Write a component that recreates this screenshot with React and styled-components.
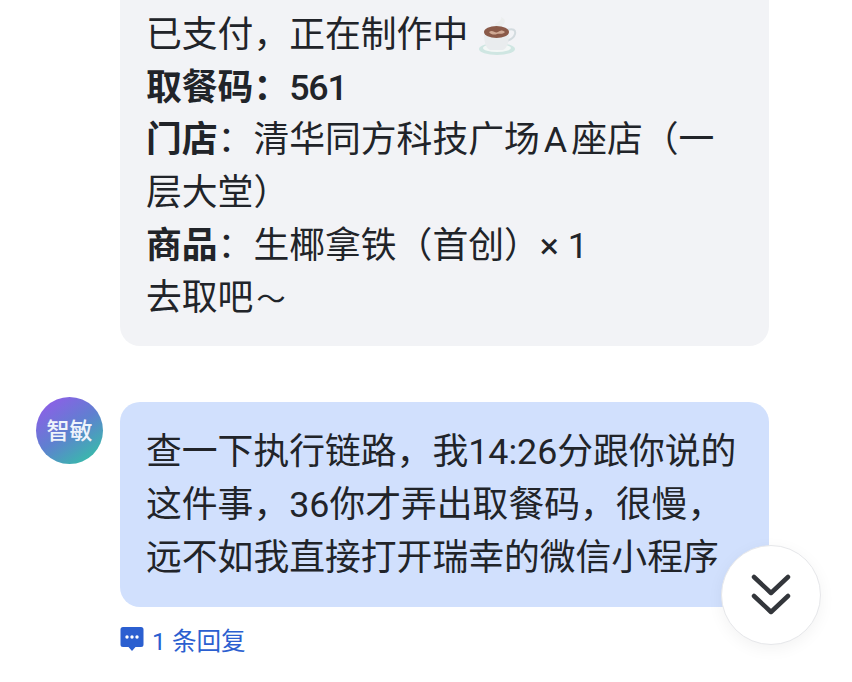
import React from "react";
import styled, { createGlobalStyle } from "styled-components";

const GlobalStyle = createGlobalStyle`
  html, body {
    margin: 0;
    padding: 0;
    background: #fff;
  }
`;

const Page = styled.div`
  width: 852px;
  height: 682px;
  overflow: hidden;
  position: relative;
  background: #fff;
  font-family: "Roboto", "Noto Sans CJK SC", sans-serif;
  color: #212429;
`;

const Row = styled.div`
  display: flex;
  align-items: flex-start;
  gap: 17px;
  padding: 0 83px 0 36px;
  margin-top: ${(p) => p.$top || 0}px;
`;

const Avatar = styled.div`
  width: 67px;
  height: 67px;
  margin-top: -5px;
  padding-bottom: 4px;
  box-sizing: border-box;
  flex: none;
  border-radius: 50%;
  background: linear-gradient(145deg, #8f5de8 8%, #5f80d0 50%, #35bfa8 92%);
  color: #eef3fb;
  font-size: 23px;
  font-weight: 500;
  display: flex;
  align-items: center;
  justify-content: center;
`;

const Column = styled.div`
  flex: 1;
  min-width: 0;
  margin-left: ${(p) => p.$indent || 0}px;
`;

const Bubble = styled.div`
  background: ${(p) => (p.$self ? "#d1e0fd" : "#f2f3f6")};
  border-radius: ${(p) => (p.$self ? "20px" : "0 0 20px 20px")};
  padding: ${(p) => (p.$self ? "24px 26px 23px" : "9px 26px 21px")};
  font-size: 35.8px;
  line-height: 52.7px;
`;

const Line = styled.div`
  white-space: nowrap;
  height: 52.7px;
`;

const Label = styled.span`
  font-weight: 700;
`;

const Code = styled.span`
  font-weight: 500;
  letter-spacing: -1.2px;
`;

const Latin = styled.span`
  margin: 0 4px;
`;

const Tilde = styled.span`
  font-size: 29px;
  margin-left: 3px;
`;

const Cup = styled.svg`
  width: 38px;
  height: 38px;
  margin-left: 11px;
  vertical-align: -8px;
`;

const Reply = styled.div`
  display: flex;
  align-items: center;
  gap: 8px;
  margin-top: 15px;
  height: 34px;
  font-size: 24.6px;
  color: #2b5fd0;
`;

const ReplyIcon = styled.svg`
  width: 24px;
  height: 26px;
  flex: none;
`;

const ScrollButton = styled.button`
  position: absolute;
  left: 721px;
  top: 545px;
  width: 100px;
  height: 100px;
  padding: 0;
  border-radius: 50%;
  border: 1px solid #e6e7ea;
  background: #fff;
  box-shadow: 0 4px 16px rgba(0, 0, 0, 0.05);
  display: flex;
  align-items: center;
  justify-content: center;
`;

const CoffeeCup = () => (
  <Cup viewBox="0 0 38 38">
    <path d="M17 9c-4-3 7-4 5-9 7 3 3 7 1 9z" fill="#eceeee" />
    <ellipse cx="18" cy="32" rx="18" ry="6" fill="#cfe6e2" />
    <ellipse cx="18" cy="31" rx="14" ry="4" fill="#f3f7f6" />
    <path d="M28 13c6-2 9 0 8 4-1 4-5 6-9 7" fill="none" stroke="#d3dbdf" strokeWidth="2" />
    <path d="M5 15h25c0 8-1 16-6 18H11C6 31 5 23 5 15z" fill="#e9ecee" />
    <ellipse cx="17.500" cy="15" rx="12.500" ry="6" fill="#8a5a49" />
    <path d="M10 15c4-3 6 2 9 0s5-2 7 0c-3 3-6 1-8 2s-6 1-8-2z" fill="#cfa994" />
  </Cup>
);

const MessageDots = () => (
  <ReplyIcon viewBox="0 0 24 26">
    <path
      d="M3 1h18a2.500 2.500 0 0 1 2.500 2.500v15A2.500 2.500 0 0 1 21 21h-5.500L12 25l-3.500-4H3A2.500 2.500 0 0 1 .5 18.500v-15A2.500 2.500 0 0 1 3 1z"
      fill="#2b5fd0"
    />
    <circle cx="7" cy="11" r="1.700" fill="#fff" />
    <circle cx="12" cy="11" r="1.700" fill="#fff" />
    <circle cx="17" cy="11" r="1.700" fill="#fff" />
  </ReplyIcon>
);

const ChevronsDown = () => (
  <svg width="40" height="44" viewBox="0 0 40 44" fill="none" stroke="#33363b" strokeWidth="4.500" strokeLinecap="round" strokeLinejoin="round">
    <path d="M3 4l17 16L37 4" />
    <path d="M3 23l17 16 17-16" />
  </svg>
);

export default function App() {
  return (
    <Page>
      <GlobalStyle />
      <Row>
        <Column $indent={84}>
          <Bubble>
            <Line>已支付，正在制作中<CoffeeCup /></Line>
            <Line><Label>取餐码：</Label><Code>561</Code></Line>
            <Line><Label>门店</Label>：清华同方科技广场<Latin>A</Latin>座店（一</Line>
            <Line>层大堂）</Line>
            <Line><Label>商品</Label>：生椰拿铁（首创）× 1</Line>
            <Line>去取吧<Tilde>～</Tilde></Line>
          </Bubble>
        </Column>
      </Row>
      <Row $top={56}>
        <Avatar>智敏</Avatar>
        <Column>
          <Bubble $self>
            <Line>查一下执行链路，我14:26分跟你说的</Line>
            <Line>这件事，36你才弄出取餐码，很慢，</Line>
            <Line>远不如我直接打开瑞幸的微信小程序</Line>
          </Bubble>
          <Reply>
            <MessageDots />
            <span>1 条回复</span>
          </Reply>
        </Column>
      </Row>
      <ScrollButton>
        <ChevronsDown />
      </ScrollButton>
    </Page>
  );
}
